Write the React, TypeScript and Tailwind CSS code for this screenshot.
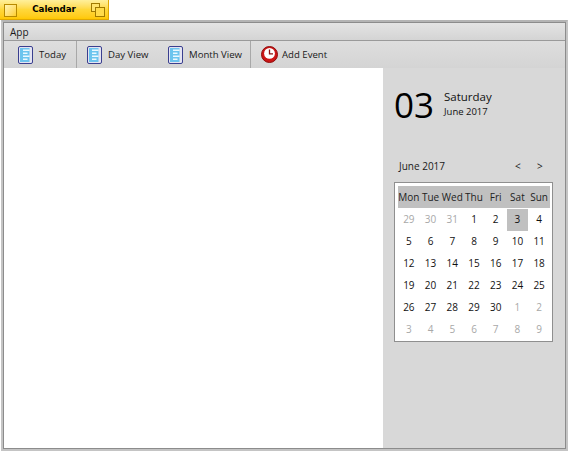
const days: [string, boolean][] = [
  ["29", true], ["30", true], ["31", true], ["1", false], ["2", false], ["3", false], ["4", false],
  ["5", false], ["6", false], ["7", false], ["8", false], ["9", false], ["10", false], ["11", false],
  ["12", false], ["13", false], ["14", false], ["15", false], ["16", false], ["17", false], ["18", false],
  ["19", false], ["20", false], ["21", false], ["22", false], ["23", false], ["24", false], ["25", false],
  ["26", false], ["27", false], ["28", false], ["29", false], ["30", false], ["1", true], ["2", true],
  ["3", true], ["4", true], ["5", true], ["6", true], ["7", true], ["8", true], ["9", true],
];

const weekdays = ["Mon", "Tue", "Wed", "Thu", "Fri", "Sat", "Sun"];

function PageIcon() {
  return (
    <svg width="15" height="18" viewBox="0 0 15 18">
      <rect x="0.5" y="0.5" width="14" height="17" rx="1.5" fill="#e4e4f2" stroke="#3a3f8f" />
      <rect x="2" y="2" width="9.5" height="14" fill="#6cc4ee" />
      <rect x="5" y="3.5" width="6.5" height="1.5" fill="#eaf8ff" />
      <rect x="5" y="6.5" width="4.5" height="1.5" fill="#eaf8ff" />
      <rect x="5" y="9.5" width="6.5" height="1.5" fill="#eaf8ff" />
      <rect x="5" y="12.5" width="4.5" height="1.5" fill="#eaf8ff" />
    </svg>
  );
}

function ClockIcon() {
  return (
    <svg width="17" height="17" viewBox="0 0 17 17">
      <circle cx="8.5" cy="8.5" r="8" fill="#cc1616" stroke="#8e0c0c" />
      <circle cx="8.5" cy="7.4" r="5.4" fill="#fff" />
      <path d="M8.5 3.4V7.8H12" fill="none" stroke="#8e1010" strokeWidth="1.3" />
    </svg>
  );
}

function Tool({ icon, label, className }: { icon: React.ReactNode; label: string; className: string }) {
  return (
    <div className={`flex items-center h-full ${className}`}>
      {icon}
      <span className="pt-[2px]">{label}</span>
    </div>
  );
}

export default function App() {
  return (
    <div className="w-[569px] h-[452px] bg-white overflow-hidden font-['Open_Sans','Noto_Sans',sans-serif] text-[9.6px] text-[#1a1a1a]">
      <div className="w-[109px] h-[20px] flex items-center justify-between pl-[4px] pr-[3px] pt-[1px] bg-gradient-to-b from-[#fff09a] via-[#ffd83a] to-[#ffc800] border-r border-b border-[#e0a800]">
        <div className="w-[13px] h-[13px] border border-[#b88a00] bg-gradient-to-br from-[#fff4b0] to-[#ffcf20]" />
        <span className="font-['DejaVu_Sans',sans-serif] font-bold text-[8.7px] text-black">Calendar</span>
        <svg width="14" height="14" viewBox="0 0 14 14">
          <rect x="0.5" y="0.5" width="8" height="8" fill="#ffe36a" stroke="#a07a00" />
          <rect x="4.5" y="4.5" width="9" height="9" fill="#ffdb4a" stroke="#a07a00" />
        </svg>
      </div>
      <div className="w-[567px] h-[431px] ml-[1px] border-2 border-[#c4c4c4] border-t-[#b4b4b4] bg-white">
        <div className="h-full border border-[#8c8c8c] flex flex-col bg-[#d8d8d8]">
          <div className="h-[18px] shrink-0 flex items-center pl-[6px] pt-[1px] text-[10px] bg-gradient-to-b from-[#e4e4e4] to-[#d4d4d4] border-b border-[#9a9a9a]">
            App
          </div>
          <div className="h-[27px] shrink-0 flex items-center bg-gradient-to-b from-[#dedede] to-[#d4d4d4]">
            <Tool icon={<PageIcon />} label="Today" className="w-[73px] pl-[14px] gap-[6px] border-r border-[#a8a8a8]" />
            <Tool icon={<PageIcon />} label="Day View" className="w-[81px] pl-[10px] gap-[6px]" />
            <Tool icon={<PageIcon />} label="Month View" className="w-[93px] pl-[10px] gap-[6px] border-r border-[#a8a8a8]" />
            <Tool icon={<ClockIcon />} label="Add Event" className="pl-[10px] gap-[4px]" />
          </div>
          <div className="flex-1 flex min-h-0">
            <div className="w-[379px] bg-white" />
            <div className="flex-1 bg-[#d8d8d8] pl-[11px] pt-[17px]">
              <div className="flex items-center h-[38px]">
                <span className="text-[35px] leading-none text-black w-[50px]">03</span>
                <div className="leading-none">
                  <div className="text-[11.5px] leading-[15px] text-[#111]">Saturday</div>
                  <div className="text-[9.5px] leading-[15px] text-[#111]">June 2017</div>
                </div>
              </div>
              <div className="flex items-center h-[16px] mt-[35px] pl-[5px] text-[10px]">
                <span className="w-[116px]">June 2017</span>
                <span className="w-[22px]">&lt;</span>
                <span>&gt;</span>
              </div>
              <div className="w-[159px] h-[160px] mt-[8px] bg-white border border-[#8f8f8f] pl-[3px] pr-[2px] py-[2px]">
                <div className="grid grid-cols-7 h-[22px] mt-[1px] bg-[#c0c0c0] items-center text-center text-[10px] text-[#222]">
                  {weekdays.map((d) => (
                    <span key={d}>{d}</span>
                  ))}
                </div>
                <div className="grid grid-cols-7 grid-rows-6 h-[131px] mt-[1px] text-center text-[10px]">
                  {days.map(([d, muted], i) => (
                    <div
                      key={i}
                      className={`flex items-center justify-center ${muted ? "text-[#a8a8a8]" : "text-[#111]"} ${i === 5 ? "bg-[#c0c0c0]" : ""}`}
                    >
                      {d}
                    </div>
                  ))}
                </div>
              </div>
            </div>
          </div>
        </div>
      </div>
    </div>
  );
}
